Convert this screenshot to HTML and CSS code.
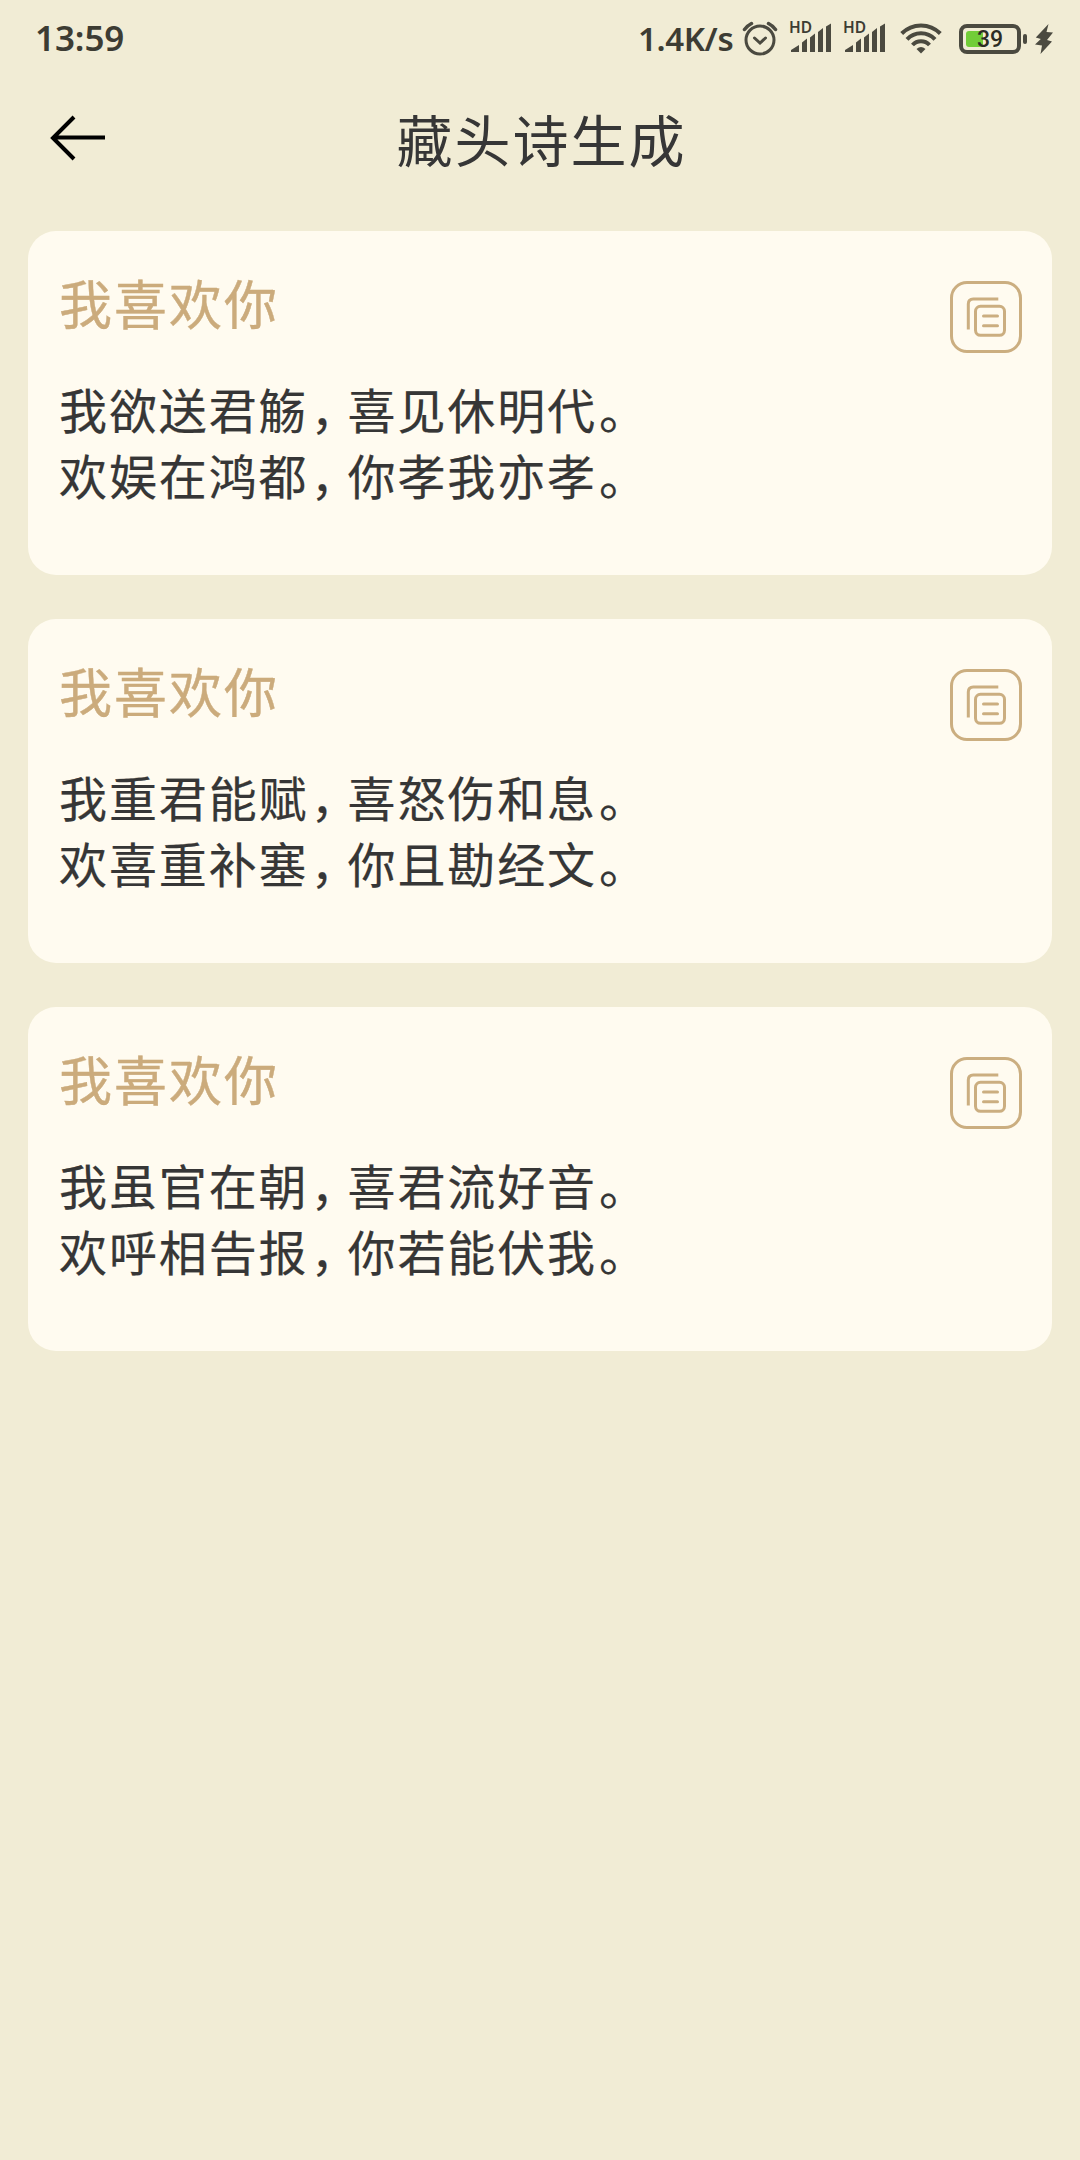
FILE: index.html
```html
<!DOCTYPE html>
<html lang="zh-CN">
<head>
  <meta charset="utf-8">
  <title>藏头诗生成</title>
  <link rel="stylesheet" href="styles.css">
</head>
<body>
  <svg width="0" height="0" class="defs">
    <symbol id="icon-signal" viewBox="0 0 42 32">
      <path d="M1 29v-2l8-5v7zM12 29V19.500l5-4V29zM20 29V14.500l5-4V29zM28 29V9l5-4v24zM36 29V3.500L41 .5V29z" fill="#4b4a40"/>
    </symbol>
    <symbol id="icon-copy" viewBox="0 0 40 40">
      <path d="M2.3 32.500V7q0-5 5-5h25"/>
      <rect x="9.500" y="9.300" width="29" height="29" rx="5"/>
      <path d="M17.500 19h14M17.500 28.700h14" stroke-linecap="round"/>
    </symbol>
  </svg>

  <div class="status-bar">
    <span class="time">13:59</span>
    <div class="status-right">
      <span class="speed">1.4K/s</span>
      <svg class="alarm" width="36" height="36" viewBox="0 0 36 36" fill="none" stroke="#4b4a40" stroke-width="3">
        <circle cx="18" cy="19" r="14"/>
        <path d="M12.500 17l5.500 5 5.500-5" stroke-linecap="round"/>
        <path d="M2.500 8.500q3-4 7-6M33.500 8.500q-3-4-7-6" stroke-width="3.500" stroke-linecap="round"/>
      </svg>
      <div class="signal">
        <svg width="42" height="32"><use href="#icon-signal"/></svg>
        <span class="hd">HD</span>
      </div>
      <div class="signal">
        <svg width="42" height="32"><use href="#icon-signal"/></svg>
        <span class="hd">HD</span>
      </div>
      <svg class="wifi" width="42" height="32" viewBox="0 0 42 32" fill="none" stroke="#4b4a40" stroke-width="4">
        <path d="M1.700 10.500A27 27 0 0 1 40.300 10.500M7 16.300A19 19 0 0 1 35 16.300M12.500 22A11.500 11.500 0 0 1 29.500 22"/>
        <path d="M21 30.500l-4.500-4.500q4.500-4 9 0z" fill="#4b4a40" stroke="none"/>
      </svg>
      <div class="battery">
        <div class="level"></div>
        <span class="percent">39</span>
      </div>
      <div class="battery-tip"></div>
      <svg class="bolt" width="18" height="30" viewBox="0 0 18 30">
        <path d="M13.500 0L.8 13.500l5 1.500L0 20.500l7 1L5.500 30 17 17.500l-5-1.500 6-7.500-6.500-.5z" fill="#4b4a40"/>
      </svg>
    </div>
  </div>

  <div class="nav-bar">
    <svg class="back" width="56" height="46" viewBox="0 0 56 46" fill="none" stroke="#000" stroke-width="4">
      <path d="M24 2L3 23l21 21M3 22.500h52"/>
    </svg>
    <h1>藏头诗生成</h1>
  </div>

  <div class="poem-list">
    <div class="poem-card">
      <div class="poem-text">
        <h2>我喜欢你</h2>
        <p>我欲送君觞<span class="comma">，</span>喜见休明代<span class="stop">。</span></p>
        <p>欢娱在鸿都<span class="comma">，</span>你孝我亦孝<span class="stop">。</span></p>
      </div>
      <button class="btn-copy"><svg width="40" height="40"><use href="#icon-copy"/></svg></button>
    </div>
    <div class="poem-card">
      <div class="poem-text">
        <h2>我喜欢你</h2>
        <p>我重君能赋<span class="comma">，</span>喜怒伤和息<span class="stop">。</span></p>
        <p>欢喜重补塞<span class="comma">，</span>你且勘经文<span class="stop">。</span></p>
      </div>
      <button class="btn-copy"><svg width="40" height="40"><use href="#icon-copy"/></svg></button>
    </div>
    <div class="poem-card">
      <div class="poem-text">
        <h2>我喜欢你</h2>
        <p>我虽官在朝<span class="comma">，</span>喜君流好音<span class="stop">。</span></p>
        <p>欢呼相告报<span class="comma">，</span>你若能伏我<span class="stop">。</span></p>
      </div>
      <button class="btn-copy"><svg width="40" height="40"><use href="#icon-copy"/></svg></button>
    </div>
  </div>
</body>
</html>
```

FILE: styles.css
```css
* {
  box-sizing: border-box;
}
body {
  margin: 0;
  min-height: 2160px;
  background: #f1ecd5;
  color: #363636;
  font-family: "Noto Sans CJK SC", sans-serif;
}
h1, h2, p {
  margin: 0;
  font-weight: 400;
}
svg {
  display: block;
  flex: none;
}
.defs {
  position: absolute;
}

/* status bar */
.status-bar {
  display: flex;
  justify-content: space-between;
  height: 78px;
  padding: 0 27px 0 35px;
  color: #3d3c33;
  font-family: "Noto Sans", sans-serif;
  font-weight: 600;
}
.time {
  font-size: 35px;
  line-height: 76px;
  letter-spacing: -0.1px;
}
.status-right {
  display: flex;
  height: 78px;
  align-items: center;
}
.speed {
  width: 102px;
  margin-right: 2px;
  font-size: 33px;
  line-height: 76px;
  letter-spacing: -0.4px;
  white-space: nowrap;
}
.alarm {
  margin-right: 12px;
}
.signal {
  position: relative;
  margin-right: 12px;
}
.signal + .wifi {
  margin-left: 2px;
}
.hd {
  position: absolute;
  left: -1px;
  top: -6px;
  font-size: 15.5px;
  line-height: 20px;
  font-weight: 600;
}
.wifi {
  margin-right: 17px;
}
.battery {
  display: flex;
  position: relative;
  align-items: center;
  width: 62px;
  height: 30px;
  padding: 0 3px;
  border: 4px solid #4b4a40;
  border-radius: 8px;
}
.level {
  width: 17px;
  height: 16px;
  background: #72cd38;
  border-radius: 3px;
}
.percent {
  position: absolute;
  left: 14px;
  top: 0;
  font-family: Roboto, sans-serif;
  font-size: 23px;
  line-height: 23px;
  font-weight: 500;
  color: #2d2c25;
}
.battery-tip {
  width: 4px;
  height: 10px;
  margin: 0 8px 0 2px;
  background: #4b4a40;
  border-radius: 2px;
}

/* title bar */
.nav-bar {
  display: grid;
  grid-template-columns: 56px 1fr 56px;
  align-items: center;
  height: 120px;
  padding: 0 50px;
}
.nav-bar h1 {
  font-size: 56px;
  line-height: 80px;
  letter-spacing: 2px;
  text-indent: 3px;
  text-align: center;
}

/* poems */
.poem-list {
  display: flex;
  flex-direction: column;
  gap: 44px;
  padding: 33px 28px;
}
.poem-card {
  display: flex;
  justify-content: space-between;
  align-items: flex-start;
  height: 344px;
  padding: 31px 30px 0 31px;
  background: #fffbf0;
  border-radius: 28px;
}
.poem-text h2 {
  margin-bottom: 33px;
  color: #cbab7c;
  font-size: 53px;
  line-height: 80px;
  letter-spacing: 2px;
  -webkit-text-stroke: 0.4px #cbab7c;
}
.poem-text p {
  font-size: 48px;
  line-height: 66px;
  letter-spacing: 1.9px;
  -webkit-text-stroke: 0.2px #363636;
}
/* half-width comma */
.comma {
  display: inline-block;
  width: 39px;
  padding-left: 2px;
  font-feature-settings: "halt";
}
.stop {
  margin-left: 2px;
}
.btn-copy {
  display: flex;
  align-items: center;
  justify-content: center;
  width: 72px;
  height: 72px;
  margin-top: 19px;
  padding: 0;
  background: none;
  border: 3px solid #cbae80;
  border-radius: 17px;
}
.btn-copy svg {
  fill: none;
  stroke: #cbae80;
  stroke-width: 3;
}
```
